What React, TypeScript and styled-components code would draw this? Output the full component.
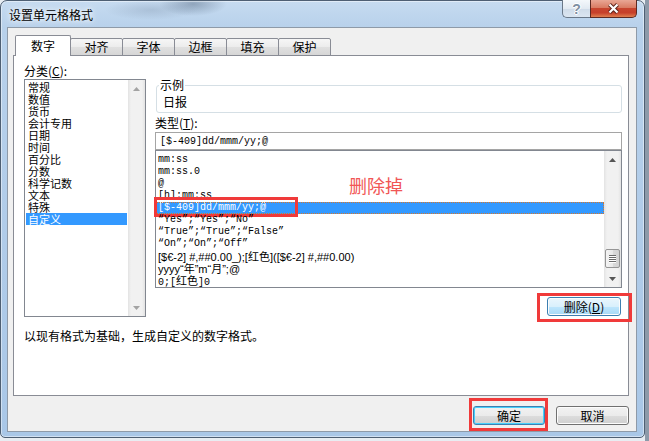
import styled, { createGlobalStyle } from "styled-components";

const GlobalStyle = createGlobalStyle`
  html, body {
    margin: 0;
    padding: 0;
  }
  body {
    width: 649px;
    height: 441px;
    overflow: hidden;
    background: linear-gradient(to right, #e8edf2 0, #e8edf2 645px, #8d9aa9 645px);
    font-family: "Noto Sans CJK SC", "Liberation Sans", sans-serif;
    font-size: 12px;
    color: #000;
  }
`;

const Window = styled.div`
  box-sizing: border-box;
  width: 645px;
  height: 438px;
  display: flex;
  flex-direction: column;
  padding: 0 7px 5px 6px;
  border: 1px solid #4e5f73;
  border-radius: 7px 7px 5px 5px;
  background:
    radial-gradient(ellipse 34px 12px at 192px 3px, rgba(80, 100, 125, 0.45), transparent),
    radial-gradient(ellipse 46px 10px at 150px 9px, rgba(120, 140, 165, 0.3), transparent),
    linear-gradient(to bottom, #c6dbf0 0, #b8d1eb 26px, #a9c7e7 100%);
  box-shadow: inset 0 0 0 1px rgba(255, 255, 255, 0.45);
`;

const TitleBar = styled.div`
  height: 26px;
  display: flex;
  align-items: flex-start;
`;

const Title = styled.div`
  margin: 6px 0 0 2px;
  line-height: 16px;
  text-shadow: 0 0 8px #fff, 0 0 4px #fff;
`;

const CaptionButtons = styled.div`
  margin: -1px 0 0 auto;
  display: flex;
`;

const HelpButton = styled.div`
  box-sizing: border-box;
  width: 28px;
  height: 18px;
  display: flex;
  align-items: center;
  justify-content: center;
  border: 1px solid #6a7888;
  border-top: none;
  border-right: none;
  border-radius: 0 0 0 5px;
  background: linear-gradient(#f4f8fb 0, #e2eaf2 50%, #cfdbe8 51%, #dbe6f1 100%);
  font: bold 14px "Liberation Sans", sans-serif;
  color: #8090a2;
  text-shadow: 1px 0 #fff, -1px 0 #fff, 0 1px #fff, 0 -1px #fff;
`;

const CloseButton = styled.div`
  box-sizing: border-box;
  width: 47px;
  height: 18px;
  display: flex;
  align-items: center;
  justify-content: center;
  border: 1px solid #5d2a22;
  border-top: none;
  border-radius: 0 0 5px 0;
  background: linear-gradient(#e9a795 0, #d97c63 45%, #c7452e 50%, #c6402a 75%, #e0804f 100%);
`;

const Client = styled.div`
  flex: 1;
  min-height: 0;
  display: flex;
  flex-direction: column;
  background: #f0f0f0;
  border: 1px solid #8e9aa8;
  padding: 7px 7px 6px 5px;
`;

const TabStrip = styled.div`
  position: relative;
  z-index: 1;
  display: flex;
  align-items: flex-end;
  height: 21px;
  padding-left: 2px;
  margin-bottom: -1px;
`;

const Tab = styled.div<{ $active?: boolean }>`
  position: relative;
  z-index: ${p => (p.$active ? 1 : 0)};
  box-sizing: border-box;
  width: ${p => (p.$active ? 56 : 53)}px;
  height: ${p => (p.$active ? 21 : 18)}px;
  margin-left: ${p => (p.$active ? 0 : -1)}px;
  display: flex;
  align-items: center;
  justify-content: center;
  border: 1px solid #898c95;
  border-bottom: ${p => (p.$active ? "none" : "1px solid #898c95")};
  border-radius: 2px 2px 0 0;
  background: ${p =>
    p.$active ? "#fff" : "linear-gradient(#f6f6f6, #ececec 50%, #e0e0e0 51%, #d6d6d6)"};
  line-height: 14px;
`;

const Panel = styled.div`
  flex: 1;
  display: flex;
  flex-direction: column;
  background: #fff;
  border: 1px solid #898c95;
  padding: 8px 6px 0 10px;
`;

const Columns = styled.div`
  display: flex;
  align-items: flex-start;
  gap: 9px;
`;

const LeftCol = styled.div`
  width: 122px;
  display: flex;
  flex-direction: column;
`;

const RightCol = styled.div`
  flex: 1;
  min-width: 0;
  display: flex;
  flex-direction: column;
  padding-top: 14px;
`;

const FieldLabel = styled.div<{ $gap?: number }>`
  height: 14px;
  line-height: 14px;
  margin-top: ${p => p.$gap ?? 0}px;
`;

const ListBox = styled.div<{ $height: number; $gap?: number }>`
  position: relative;
  box-sizing: border-box;
  height: ${p => p.$height}px;
  margin-top: ${p => p.$gap ?? 0}px;
  display: flex;
  border: 1px solid #828790;
  background: #fff;
`;

const CategoryItems = styled.div`
  flex: 1;
  min-width: 0;
  padding: 1px;
`;

const CategoryItem = styled.div<{ $selected?: boolean }>`
  height: 12px;
  line-height: 12px;
  padding-left: 2px;
  font-size: 11px;
  white-space: nowrap;
  background: ${p => (p.$selected ? "#3399ff" : "transparent")};
  color: ${p => (p.$selected ? "#fff" : "#000")};
`;

const TypeRows = styled.div`
  flex: 1;
  min-width: 0;
  padding-top: 3px;
`;

const TypeRow = styled.div<{ $selected?: boolean; $narrow?: boolean }>`
  position: relative;
  height: 12px;
  line-height: 12px;
  padding-left: 2px;
  white-space: nowrap;
  font-family: ${p => (p.$narrow ? '"Liberation Sans", sans-serif' : '"Liberation Mono", monospace')};
  font-size: ${p => (p.$narrow ? 11 : 10)}px;
  background: ${p => (p.$selected ? "#3399ff" : "transparent")};
  color: ${p => (p.$selected ? "#fff" : "#000")};
  outline: ${p => (p.$selected ? "1px dotted #d8782c" : "none")};
  outline-offset: -1px;
`;

const Han = styled.span`
  font-family: "Noto Sans CJK SC", sans-serif;
  font-size: 11px;
`;

const RowMark = styled.span`
  position: absolute;
  left: -2px;
  top: -5px;
  width: 144px;
  height: 20px;
  box-sizing: border-box;
  border: 3px solid #f03a3a;
  pointer-events: none;
`;

const Note = styled.span`
  position: absolute;
  left: 193px;
  top: 22px;
  font-size: 18px;
  line-height: 24px;
  color: #f15656;
`;

const ScrollBar = styled.div`
  width: 17px;
  display: flex;
  flex-direction: column;
  background: linear-gradient(to right, #e3e3e3, #f1f1f1 3px, #f1f1f1 14px, #e3e3e3);
`;

const ArrowCell = styled.div`
  height: 17px;
  display: flex;
  align-items: center;
  justify-content: center;
`;

const Track = styled.div`
  flex: 1;
  display: flex;
  flex-direction: column;
  justify-content: flex-end;
  padding-bottom: 2px;
`;

const Thumb = styled.div`
  height: 19px;
  margin: 0 1px;
  box-sizing: border-box;
  border: 1px solid #959595;
  border-radius: 2px;
  background: linear-gradient(to right, #f4f4f4, #e8e8e8 50%, #dadada 51%, #d2d2d2);
  display: flex;
  flex-direction: column;
  align-items: center;
  justify-content: center;
  gap: 1px;
`;

const Grip = styled.span`
  width: 7px;
  height: 1px;
  background: #6a6a6a;
  box-shadow: 0 1px #fff;
`;

const GroupBox = styled.fieldset`
  margin: 0 0 0 1px;
  padding: 3px 5px 3px;
  border: 1px solid #d5dfe5;
  border-radius: 3px;
  min-width: 0;
`;

const Legend = styled.legend`
  margin-left: -3px;
  padding: 0 1px;
  line-height: 14px;
`;

const Sample = styled.div`
  line-height: 14px;
  padding-left: 1px;
`;

const TypeInput = styled.input`
  box-sizing: border-box;
  width: 100%;
  height: 18px;
  margin: 2px 0 0;
  padding: 0 4px;
  border: 1px solid #a5a5a5;
  font: 10px "Liberation Mono", monospace;
  color: #000;
  background: #fff;
  outline: none;
`;

const DeleteRow = styled.div`
  display: flex;
  justify-content: flex-end;
  margin: 9px 1px 0 0;
`;

const Marked = styled.span<{ $inset: string }>`
  position: relative;
  display: inline-flex;
  &::after {
    content: "";
    position: absolute;
    inset: ${p => p.$inset};
    border: 3px solid #f03a3a;
    pointer-events: none;
  }
`;

const Button = styled.button<{ $width: number; $tone?: "default" | "hot" }>`
  box-sizing: border-box;
  width: ${p => p.$width}px;
  height: 19px;
  padding: 0;
  font: 12px "Noto Sans CJK SC", "Liberation Sans", sans-serif;
  line-height: 1;
  color: #000;
  border-radius: 3px;
  border: 1px solid ${p => (p.$tone ? "#3c7fb1" : "#707070")};
  background: ${p =>
    p.$tone === "hot"
      ? "linear-gradient(#eaf6fd, #d9f0fc 50%, #bee6fd 51%, #a7d9f5)"
      : "linear-gradient(#f2f2f2, #ebebeb 50%, #dddddd 51%, #cfcfcf)"};
  box-shadow: ${p => (p.$tone === "default" ? "inset 0 0 0 1px #48d0fb" : "inset 0 0 0 1px #fcfcfc")};
`;

const Description = styled.div`
  margin-top: 12px;
  line-height: 14px;
`;

const ButtonRow = styled.div`
  display: flex;
  justify-content: flex-end;
  gap: 11px;
  margin-top: 10px;
`;

const categories = ["常规", "数值", "货币", "会计专用", "日期", "时间", "百分比", "分数", "科学记数", "文本", "特殊", "自定义"];

const types = [
  { text: "mm:ss" },
  { text: "mm:ss.0" },
  { text: "@" },
  { text: "[h]:mm:ss" },
  { text: "[$-409]dd/mmm/yy;@", selected: true },
  { text: "“Yes”;“Yes”;“No”" },
  { text: "“True”;“True”;“False”" },
  { text: "“On”;“On”;“Off”" },
  { text: "[$€-2] #,##0.00_);[红色]([$€-2] #,##0.00)", narrow: true },
  { text: "yyyy“年”m“月”;@", narrow: true },
  { text: "0;[红色]0" },
];

function withHan(text: string) {
  return text.split(/([\u4e00-\u9fff]+)/).map((part, i) => (i % 2 ? <Han key={i}>{part}</Han> : part));
}

function Arrow({ down, color }: { down?: boolean; color: string }) {
  return (
    <svg width="7" height="4" viewBox="0 0 7 4">
      <path d={down ? "M0 0 L7 0 L3.5 4 Z" : "M0 4 L3.5 0 L7 4 Z"} fill={color} />
    </svg>
  );
}

function App() {
  return (
    <>
      <GlobalStyle />
      <Window>
        <TitleBar>
          <Title>设置单元格格式</Title>
          <CaptionButtons>
            <HelpButton>?</HelpButton>
            <CloseButton>
              <svg width="13" height="11" viewBox="0 0 13 11">
                <path d="M2.5 1.5 L10.5 9.5 M10.5 1.5 L2.5 9.5" stroke="#5a2219" strokeWidth="4" />
                <path d="M2.5 1.5 L10.5 9.5 M10.5 1.5 L2.5 9.5" stroke="#fff" strokeWidth="2.2" />
              </svg>
            </CloseButton>
          </CaptionButtons>
        </TitleBar>
        <Client>
          <TabStrip>
            <Tab $active>数字</Tab>
            <Tab>对齐</Tab>
            <Tab>字体</Tab>
            <Tab>边框</Tab>
            <Tab>填充</Tab>
            <Tab>保护</Tab>
          </TabStrip>
          <Panel>
            <Columns>
              <LeftCol>
                <FieldLabel>分类(<u>C</u>):</FieldLabel>
                <ListBox $height={238} $gap={1}>
                  <CategoryItems>
                    {categories.map(c => (
                      <CategoryItem key={c} $selected={c === "自定义"}>{c}</CategoryItem>
                    ))}
                  </CategoryItems>
                  <ScrollBar>
                    <ArrowCell><Arrow color="#a3a3a3" /></ArrowCell>
                    <Track />
                    <ArrowCell><Arrow down color="#a3a3a3" /></ArrowCell>
                  </ScrollBar>
                </ListBox>
              </LeftCol>
              <RightCol>
                <GroupBox>
                  <Legend>示例</Legend>
                  <Sample>日报</Sample>
                </GroupBox>
                <FieldLabel $gap={3}>类型(<u>T</u>):</FieldLabel>
                <TypeInput readOnly value="[$-409]dd/mmm/yy;@" />
                <ListBox $height={138}>
                  <TypeRows>
                    {types.map(t => (
                      <TypeRow key={t.text} $selected={t.selected} $narrow={t.narrow}>
                        {withHan(t.text)}
                        {t.selected && <RowMark />}
                      </TypeRow>
                    ))}
                  </TypeRows>
                  <ScrollBar>
                    <ArrowCell><Arrow color="#555" /></ArrowCell>
                    <Track>
                      <Thumb>
                        <Grip />
                        <Grip />
                        <Grip />
                        <Grip />
                      </Thumb>
                    </Track>
                    <ArrowCell><Arrow down color="#555" /></ArrowCell>
                  </ScrollBar>
                  <Note>删除掉</Note>
                </ListBox>
                <DeleteRow>
                  <Marked $inset="-4px -11px -6px -10px">
                    <Button $width={74} $tone="hot">删除(<u>D</u>)</Button>
                  </Marked>
                </DeleteRow>
              </RightCol>
            </Columns>
            <Description>以现有格式为基础，生成自定义的数字格式。</Description>
          </Panel>
          <ButtonRow>
            <Marked $inset="-8px -3px -6px -4px">
              <Button $width={72} $tone="default">确定</Button>
            </Marked>
            <Button $width={73}>取消</Button>
          </ButtonRow>
        </Client>
      </Window>
    </>
  );
}

export default App;
